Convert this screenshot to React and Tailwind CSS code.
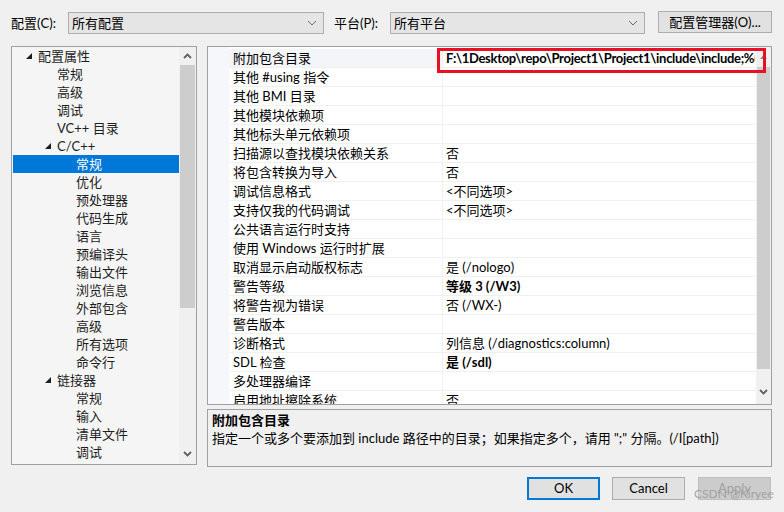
import React from "react";

const TREE = [
  { label: "配置属性", level: 0, arrow: true },
  { label: "常规", level: 1 },
  { label: "高级", level: 1 },
  { label: "调试", level: 1 },
  { label: "VC++ 目录", level: 1 },
  { label: "C/C++", level: 1, arrow: true },
  { label: "常规", level: 2, selected: true },
  { label: "优化", level: 2 },
  { label: "预处理器", level: 2 },
  { label: "代码生成", level: 2 },
  { label: "语言", level: 2 },
  { label: "预编译头", level: 2 },
  { label: "输出文件", level: 2 },
  { label: "浏览信息", level: 2 },
  { label: "外部包含", level: 2 },
  { label: "高级", level: 2 },
  { label: "所有选项", level: 2 },
  { label: "命令行", level: 2 },
  { label: "链接器", level: 1, arrow: true },
  { label: "常规", level: 2 },
  { label: "输入", level: 2 },
  { label: "清单文件", level: 2 },
  { label: "调试", level: 2 },
];

const LEVEL_PAD = ["pl-[13px]", "pl-[32px]", "pl-[51px]"];

const PROPS = [
  { name: "附加包含目录", value: "F:\\1Desktop\\repo\\Project1\\Project1\\include\\include;%(AdditionalIncludeDirectories)", bold: true, first: true },
  { name: "其他 #using 指令", value: "" },
  { name: "其他 BMI 目录", value: "" },
  { name: "其他模块依赖项", value: "" },
  { name: "其他标头单元依赖项", value: "" },
  { name: "扫描源以查找模块依赖关系", value: "否" },
  { name: "将包含转换为导入", value: "否" },
  { name: "调试信息格式", value: "<不同选项>" },
  { name: "支持仅我的代码调试", value: "<不同选项>" },
  { name: "公共语言运行时支持", value: "" },
  { name: "使用 Windows 运行时扩展", value: "" },
  { name: "取消显示启动版权标志", value: "是 (/nologo)" },
  { name: "警告等级", value: "等级 3 (/W3)", bold: true },
  { name: "将警告视为错误", value: "否 (/WX-)" },
  { name: "警告版本", value: "" },
  { name: "诊断格式", value: "列信息 (/diagnostics:column)" },
  { name: "SDL 检查", value: "是 (/sdl)", bold: true },
  { name: "多处理器编译", value: "" },
  { name: "启用地址擦除系统", value: "否" },
];

const FONT = { fontFamily: 'Lato, "Noto Sans CJK SC", sans-serif' };

function Chevron({ up = false, className = "" }) {
  return (
    <svg width="9" height="6" viewBox="0 0 9 6" className={className}>
      <polyline
        points={up ? "1,5 4.5,1.5 8,5" : "1,1 4.5,4.5 8,1"}
        fill="none"
        stroke="currentColor"
        strokeWidth="1.8"
      />
    </svg>
  );
}

function Combo({ text, width }) {
  return (
    <div className={`${width} h-[22px] mt-[1px] bg-[#e5e5e5] border border-[#adadad] flex items-center justify-between pl-[3px] pr-[6px]`}>
      <span className="leading-[20px]">{text}</span>
      <svg width="10" height="6" viewBox="0 0 10 6" className="text-[#6d6d6d]">
        <polyline points="1,1 5,5 9,1" fill="none" stroke="currentColor" strokeWidth="1" />
      </svg>
    </div>
  );
}

export default function App() {
  return (
    <div className="relative w-[784px] h-[512px] bg-[#f0f0f0] text-[13px] text-black overflow-hidden" style={FONT}>
      {/* top bar */}
      <div className="flex items-start h-[24px] pt-0 mt-[11px] px-[11px]">
        <span className="w-[57px] leading-[24px]">配置(C):</span>
        <Combo text="所有配置" width="w-[256px]" />
        <span className="ml-[10px] w-[56px] leading-[24px]">平台(P):</span>
        <Combo text="所有平台" width="w-[255px]" />
        <button className="ml-[13px] w-[114px] h-[22px] bg-[#e1e1e1] border border-[#adadad] leading-[20px]">
          配置管理器(O)...
        </button>
      </div>

      {/* main */}
      <div className="flex mt-[11px] px-[11px]">
        {/* tree */}
        <div className="w-[186px] h-[419px] border border-[#a0a0a0] bg-[#f5f5f5] flex">
          <div className="flex-1 overflow-hidden text-[#1e1e1e]">
            {TREE.map((t, i) => (
              <div
                key={i}
                className={`flex items-center h-[18px] ml-[1px] ${LEVEL_PAD[t.level]} ${t.selected ? "bg-[#0078d7] text-white" : ""}`}
              >
                <span className="w-[12px] flex items-center">
                  {t.arrow && (
                    <svg width="6" height="6" viewBox="0 0 6 6">
                      <polygon points="6,0 6,6 0,6" fill="#1e1e1e" />
                    </svg>
                  )}
                </span>
                <span className="leading-[18px] whitespace-nowrap">{t.label}</span>
              </div>
            ))}
          </div>
          <div className="w-[17px] bg-[#f0f0f0] flex flex-col">
            <div className="h-[18px] flex items-center justify-center text-[#606060]">
              <Chevron up />
            </div>
            <div className="h-[243px] mx-[1px] bg-[#cdcdcd]" />
            <div className="flex-1" />
            <div className="h-[18px] flex items-center justify-center text-[#606060] mb-[1px]">
              <Chevron />
            </div>
          </div>
        </div>

        {/* right column */}
        <div className="ml-[10px] w-[565px] flex flex-col">
          <div className="relative h-[359px] border border-[#a0a0a0] bg-white flex">
            <div className="w-[21px] bg-[#f5f7fb]" />
            <div className="flex-1 pt-[2px] overflow-hidden">
              {PROPS.map((p, i) => (
                <div key={i} className="flex h-[19px] border-b border-[#f0f0f0]">
                  <div className={`w-[214px] pl-[4px] border-r border-[#f0f0f0] leading-[18px] whitespace-nowrap overflow-hidden ${p.first ? "bg-[#f3f5f9]" : ""}`}>
                    {p.name}
                  </div>
                  <div className={`w-[312px] pl-[3px] leading-[18px] whitespace-nowrap overflow-hidden ${p.bold ? "font-bold" : ""} ${p.first ? "tracking-[-0.3px]" : ""}`}>
                    {p.value}
                  </div>
                </div>
              ))}
            </div>
            <div className="w-[15px] bg-[#f0f0f0] flex flex-col">
              <div className="h-[20px] flex items-center justify-center text-[#8a8a8a]">
                <svg width="7" height="4" viewBox="0 0 7 4">
                  <polygon points="0,4 3.5,0 7,4" fill="currentColor" />
                </svg>
              </div>
              <div className="h-[302px] mx-[1px] bg-[#cdcdcd]" />
              <div className="flex-1" />
              <div className="h-[16px] flex items-center justify-center text-[#606060] mb-[4px]">
                <Chevron />
              </div>
            </div>
            {/* annotation */}
            <div className="absolute left-[229px] top-[1px] w-[329px] h-[25px] border-[3px] border-[#e81123]" />
          </div>

          <div className="mt-[4px] h-[58px] border border-[#a0a0a0] bg-[#f0f0f0] pl-[4px] pt-[1px]">
            <div className="font-bold leading-[18px]">附加包含目录</div>
            <div className="leading-[18px]">指定一个或多个要添加到 include 路径中的目录；如果指定多个，请用 ";" 分隔。(/I[path])</div>
          </div>
        </div>
      </div>

      {/* buttons */}
      <div className="flex justify-end mt-[10px] pr-[13px]">
        <button className="w-[73px] h-[23px] bg-[#e1e1e1] border-2 border-[#0078d7] leading-[19px]">OK</button>
        <button className="ml-[12px] w-[73px] h-[23px] bg-[#e1e1e1] border border-[#adadad] leading-[21px]">Cancel</button>
        <button className="ml-[13px] w-[73px] h-[23px] bg-[#cccccc] border border-[#bfbfbf] text-[#a0a0a0] leading-[21px]">Apply</button>
      </div>

      {/* watermark */}
      <div className="absolute left-[694px] top-[486px] text-[12px] text-[#9b9b9b] leading-[16px] whitespace-nowrap" style={{ opacity: 0.85 }}>
        CSDN @Kiryee
      </div>
    </div>
  );
}
